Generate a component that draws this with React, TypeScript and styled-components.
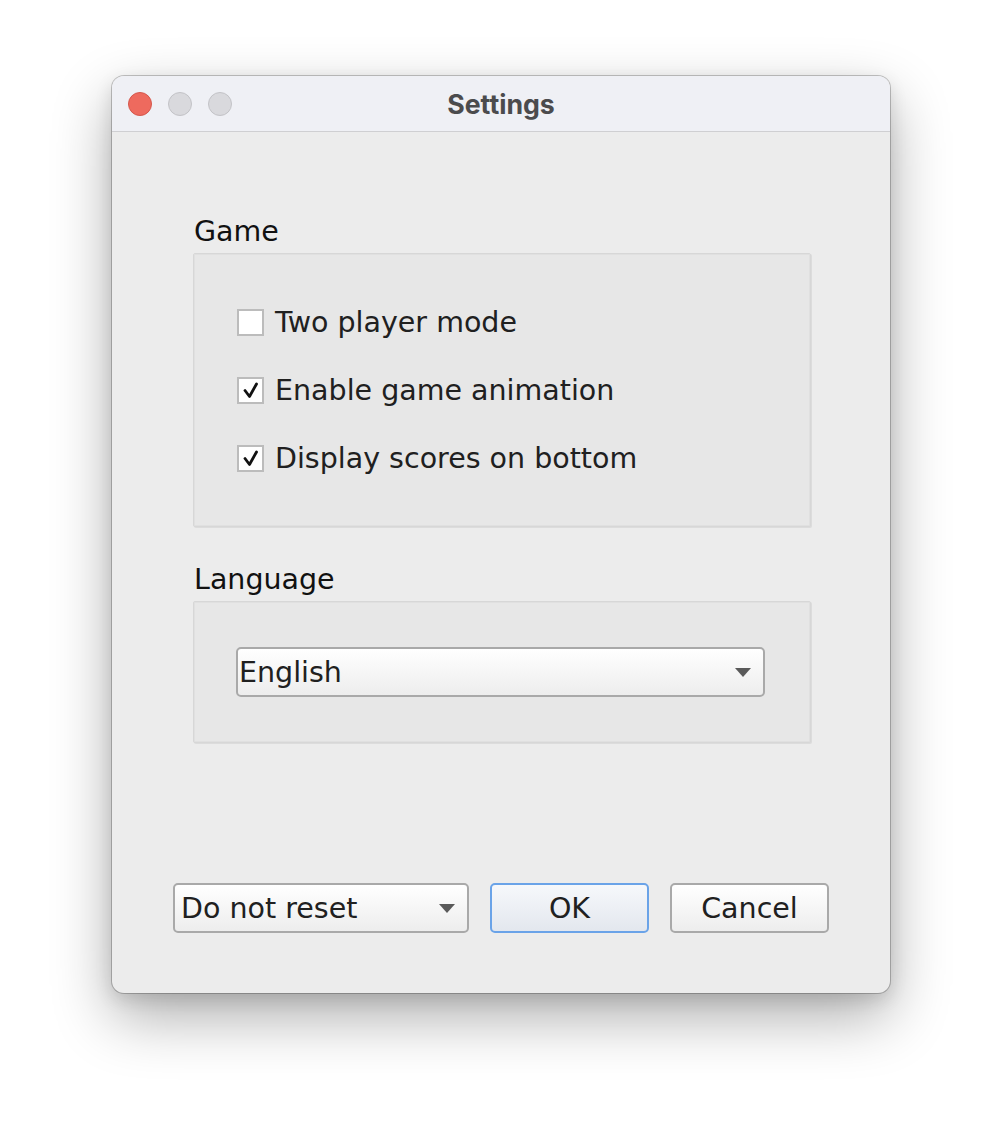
import React from "react";
import styled, { createGlobalStyle } from "styled-components";

const Global = createGlobalStyle`
  html, body { margin: 0; padding: 0; background: #ffffff; }
  body { width: 1002px; height: 1142px; overflow: hidden; }
  * { box-sizing: border-box; }
`;

const FONT = `"DejaVu Sans", "Open Sans", sans-serif`;
const SIZE = 28.5;

const Page = styled.div`
  padding: 76px 0 0 112px;
`;

const Window = styled.div`
  width: 778px;
  height: 917px;
  border-radius: 12px;
  background: #ececec;
  overflow: hidden;
  display: flex;
  flex-direction: column;
  box-shadow: 0 0 0 1px rgba(0, 0, 0, 0.22), 0 24px 60px rgba(0, 0, 0, 0.32),
    0 6px 18px rgba(0, 0, 0, 0.12);
`;

const TitleBar = styled.div`
  height: 56px;
  flex: none;
  background: #eff0f5;
  border-bottom: 1px solid #cfcfd2;
  display: grid;
  grid-template-columns: 1fr auto 1fr;
  align-items: center;
  padding: 0 16px;
`;

const Lights = styled.div`
  display: flex;
  gap: 16px;
`;

const Light = styled.span<{ $color: string; $border: string }>`
  width: 24px;
  height: 24px;
  border-radius: 50%;
  background: ${(p) => p.$color};
  border: 1px solid ${(p) => p.$border};
`;

const Title = styled.div`
  font-family: Inter, "Noto Sans", sans-serif;
  font-weight: 700;
  font-size: 26.7px;
  color: #4b4b4d;
  padding-top: 1px;
`;

const Body = styled.div`
  flex: 1;
  display: flex;
  flex-direction: column;
  padding: 84px 61px 60px 61px;
  font-family: ${FONT};
`;

const Section = styled.section<{ $gapTop?: number }>`
  margin: ${(p) => p.$gapTop ?? 0}px 18px 0 20px;
  display: flex;
  flex-direction: column;
`;

const SectionLabel = styled.div`
  height: 30px;
  line-height: 32px;
  font-size: ${SIZE}px;
  color: #111111;
  padding-left: 1px;
  margin-bottom: 7px;
`;

const GroupBox = styled.div<{ $padV: number }>`
  border: 1px solid #d7d7d7;
  box-shadow: inset 0 0 0 1px #e0e0e0, 1px 1px 0 #dcdcdc;
  background: #e7e7e7;
  border-radius: 2px;
  padding: ${(p) => p.$padV}px 45px ${(p) => p.$padV}px 42px;
  display: flex;
  flex-direction: column;
  gap: 28px;
`;

const CheckRow = styled.label`
  height: 40px;
  display: flex;
  align-items: center;
  gap: 11px;
  font-size: ${SIZE}px;
  color: #202020;
`;

const Box = styled.span`
  width: 27px;
  height: 27px;
  flex: none;
  margin-left: 1px;
  background: #ffffff;
  border: 2px solid #bcbcbc;
  display: flex;
  align-items: center;
  justify-content: center;
`;

const ComboBox = styled.div<{ $width?: number; $padLeft: number }>`
  height: 50px;
  ${(p) => (p.$width ? `width: ${p.$width}px;` : "")}
  border: 2px solid #a9a9a9;
  border-radius: 5px;
  background: linear-gradient(#ffffff, #ededed);
  display: flex;
  align-items: center;
  justify-content: space-between;
  padding: 0 12px 0 ${(p) => p.$padLeft}px;
  font-size: ${SIZE}px;
  color: #202020;
  font-family: ${FONT};
`;

const Spacer = styled.div`
  flex: 1;
`;

const ButtonRow = styled.div`
  display: flex;
  gap: 21px;
  align-items: center;
`;

const Button = styled.button<{ $primary?: boolean }>`
  width: 159px;
  height: 50px;
  border-radius: 5px;
  font-family: ${FONT};
  font-size: ${SIZE}px;
  color: #202020;
  padding: 0;
  border: 2px solid ${(p) => (p.$primary ? "#6aa3e8" : "#a9a9a9")};
  background: ${(p) =>
    p.$primary
      ? "linear-gradient(#f6f8fb, #e3e7ee)"
      : "linear-gradient(#ffffff, #ededed)"};
`;

const Check = () => (
  <svg width="18" height="18" viewBox="0 0 18 18">
    <path
      d="M3 9.5 L7.5 15.5 L14.5 3"
      fill="none"
      stroke="#111"
      strokeWidth="2.8"
      strokeLinecap="round"
      strokeLinejoin="round"
    />
  </svg>
);

const Arrow = () => (
  <svg width="16" height="9" viewBox="0 0 16 9">
    <path d="M0 0 H16 L8 9 Z" fill="#5a5a5a" />
  </svg>
);

const options = [
  { label: "Two player mode", checked: false },
  { label: "Enable game animation", checked: true },
  { label: "Display scores on bottom", checked: true },
];

export default function App() {
  return (
    <>
      <Global />
      <Page>
        <Window>
          <TitleBar>
            <Lights>
              <Light $color="#ee6a5e" $border="#d5574c" />
              <Light $color="#d9d9dd" $border="#c3c3c7" />
              <Light $color="#d9d9dd" $border="#c3c3c7" />
            </Lights>
            <Title>Settings</Title>
            <span />
          </TitleBar>
          <Body>
            <Section>
              <SectionLabel>Game</SectionLabel>
              <GroupBox $padV={48}>
                {options.map((o) => (
                  <CheckRow key={o.label}>
                    <Box>{o.checked && <Check />}</Box>
                    {o.label}
                  </CheckRow>
                ))}
              </GroupBox>
            </Section>
            <Section $gapTop={37}>
              <SectionLabel>Language</SectionLabel>
              <GroupBox $padV={45}>
                <ComboBox $padLeft={1}>
                  English
                  <Arrow />
                </ComboBox>
              </GroupBox>
            </Section>
            <Spacer />
            <ButtonRow>
              <ComboBox $width={296} $padLeft={6}>
                Do not reset
                <Arrow />
              </ComboBox>
              <Button $primary>OK</Button>
              <Button>Cancel</Button>
            </ButtonRow>
          </Body>
        </Window>
      </Page>
    </>
  );
}
